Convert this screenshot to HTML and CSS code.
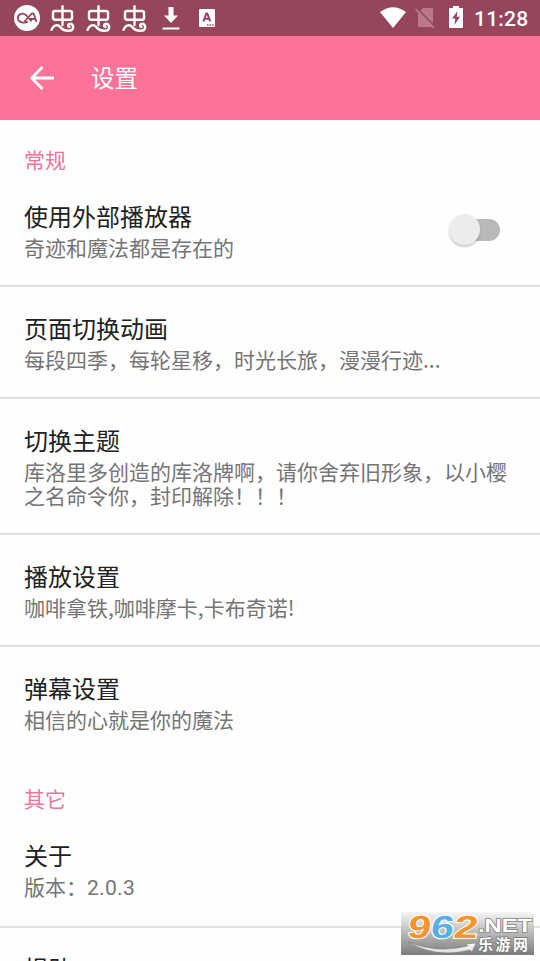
FILE: index.html
```
<!DOCTYPE html>
<html lang="zh-CN">
<head>
<meta charset="utf-8">
<title>设置</title>
<link rel="stylesheet" href="styles.css">
</head>
<body>
<svg class="defs" width="0" height="0"><defs><g id="bug" fill="none" stroke="#fff" stroke-width="2.4" stroke-linecap="round" stroke-linejoin="round"><rect x="3" y="6" width="19" height="8.800" rx="2"/><path d="M12.500 1.300V20M1.500 24.800C3.500 20.300 7.500 18.800 10 21.800C12.500 25.300 14.500 25.800 18.500 25.800C25 25.800 24 18.300 20 18.800C17.500 19.100 17.500 21.800 19.500 21.800"/></g></defs></svg>
<div class="screen">
  <header class="status">
    <div class="notices">
      <svg width="26" height="26" viewBox="0 0 26 26"><circle cx="13" cy="13" r="13" fill="#fff"/><path d="M14 16.500C11 18.500 4 18 4 13C4 8.500 9 7.500 12 10L17.500 16.500M10.500 16.500L17.500 8.800C18.500 8 19.500 8.500 20 9.500L22.500 17M15 14H20.500" fill="none" stroke="#96455b" stroke-width="1.800"/></svg>
      <svg class="bug" width="26" height="28" viewBox="0 0 26 28"><use href="#bug"/></svg>
      <svg class="bug" width="26" height="28" viewBox="0 0 26 28"><use href="#bug"/></svg>
      <svg class="bug" width="26" height="28" viewBox="0 0 26 28"><use href="#bug"/></svg>
      <svg class="download" width="18" height="24" viewBox="0 0 18 24"><path d="M6.500 1h5v8.500h4.500L9 17 2 9.500h4.500zM.5 21.500h17v2H.5z" fill="#fff"/></svg>
      <svg class="letter" width="16" height="18" viewBox="0 0 16 18"><rect width="16" height="18" rx="1" fill="#fff"/><path d="M4.300 12.500L7.300 4.500h1L11.300 12.500M5.500 9.800h4.600" fill="none" stroke="#96455b" stroke-width="2"/><path d="M8 15.200h1.500v1.500H8zM10.600 15.200h1.500v1.500h-1.500zM13.200 15.200h1.500v1.500h-1.500z" fill="#96455b"/></svg>
    </div>
    <div class="system">
      <svg class="wifi" width="26" height="21" viewBox="0 0 26 21"><path d="M0 5Q13-4.500 26 5L13 21z" fill="#fff"/></svg>
      <svg class="sim" width="20" height="22" viewBox="0 0 20 22"><path d="M8 1h9q1 0 1 1v17q0 1-1 1H4q-1 0-1-1V6z" fill="#b9798a"/><path d="M1.500 .5L20 19.500" stroke="#96455b" stroke-width="1.500"/><path d="M.5 2L19 21" stroke="#b9798a" stroke-width="1.700"/></svg>
      <svg class="battery" width="14" height="22" viewBox="0 0 14 22"><path d="M4 0h6v2h3q1 0 1 1v18q0 1-1 1H1q-1 0-1-1V3q0-1 1-1h3z" fill="#fff"/><path d="M8.500 5L3 12.500h3.300L5.500 19 11 10.800H7.800z" fill="#96455b"/></svg>
      <span class="clock">11:28</span>
    </div>
  </header>
  <nav class="appbar">
    <svg width="24" height="24" viewBox="0 0 24 24"><path d="M24 12H2M12.500 1L1.700 12l10.800 11" fill="none" stroke="#fff" stroke-width="2.800"/></svg>
    <h1>设置</h1>
  </nav>
  <main>
    <h2>常规</h2>
    <section class="row first with-switch"><div><h3>使用外部播放器</h3><p>奇迹和魔法都是存在的</p></div><div class="switch"><div class="thumb"></div></div></section>
    <section class="row"><h3>页面切换动画</h3><p>每段四季，每轮星移，时光长旅，漫漫行迹...</p></section>
    <section class="row"><h3>切换主题</h3><p>库洛里多创造的库洛牌啊，请你舍弃旧形象，以小樱<br>之名命令你，封印解除！！！</p></section>
    <section class="row"><h3>播放设置</h3><p>咖啡拿铁,咖啡摩卡,卡布奇诺!</p></section>
    <section class="row last"><h3>弹幕设置</h3><p>相信的心就是你的魔法</p></section>
    <h2>其它</h2>
    <section class="row about"><h3>关于</h3><p>版本：<span class="version">2.0.3</span></p></section>
    <section class="row about"><h3>捐助</h3></section>
  </main>
  <svg class="watermark" width="133" height="43" viewBox="0 0 133 43">
    <defs>
      <linearGradient id="shade" x2="0" y2="1"><stop stop-color="#f5f5f5"/><stop offset=".5" stop-color="#b8b8b8"/><stop offset="1" stop-color="#7c7c7c"/></linearGradient>
      <linearGradient id="swoosh" x2="0" y2="1"><stop stop-color="#fff"/><stop offset="1" stop-color="#ddd"/></linearGradient>
    </defs>
    <rect width="133" height="43" fill="url(#shade)"/>
    <path d="M7 30Q36 42 67 34L65 32 75 31 71 40 69 38Q36 47 7 30z" fill="url(#swoosh)" stroke="#777" stroke-width=".5"/>
    <g class="digits" transform="translate(3.500 0) skewX(-8)"><text x="6" y="26" textLength="23" lengthAdjust="spacingAndGlyphs" fill="#f7942b">9</text><text x="29" y="26" textLength="23" lengthAdjust="spacingAndGlyphs" fill="#56b0e5">6</text><text x="52" y="26" textLength="24" lengthAdjust="spacingAndGlyphs" fill="#f7942b">2</text></g>
    <text class="net" x="77" y="20" textLength="54" lengthAdjust="spacingAndGlyphs">.NET</text>
    <text class="brand" x="77" y="38" textLength="50">乐游网</text>
  </svg>
</div>
</body>
</html>
```
FILE: styles.css
```
* { box-sizing: border-box; margin: 0; padding: 0; }
body { font-family: Roboto, "Noto Sans CJK SC", sans-serif; background: #fefefe; overflow: hidden; }
svg { display: block; flex: none; }
.defs { position: absolute; }
.screen { position: relative; height: 961px; overflow: hidden; }
.status { height: 36px; background: #96455b; display: flex; justify-content: space-between; padding: 0 12px 0 14px; }
.notices, .system { display: flex; align-items: center; }
.notices { gap: 10px; }
.bug { margin-top: 1px; }
.download { margin-left: 4px; }
.letter { margin-left: 9px; }
.system { color: #fff; }
.wifi { margin-top: -2px; }
.sim { margin-left: 9px; }
.battery { margin-left: 14px; margin-top: -2px; }
.clock { font-size: 21px; font-weight: 500; margin-left: 11px; width: 54px; white-space: nowrap; letter-spacing: .2px; padding-top: 2px; }
.appbar { height: 84px; background: #fc7298; display: flex; align-items: center; padding-left: 30px; gap: 37px; color: #fff; }
h1 { font-size: 23.5px; line-height: 36px; font-weight: 400; padding-top: 2px; }
h2 { height: 56px; padding: 25px 24px 0; font-size: 21px; line-height: 32px; font-weight: 400; color: #f4749a; }
.row { min-height: 112px; padding: 29px 24px 26px; border-bottom: 2px solid #e0e0e0; white-space: nowrap; }
.first { min-height: 111px; padding-top: 28px; }
.about { padding-top: 28px; }
.last { border-bottom-color: transparent; }
h3 { font-size: 24px; line-height: 28px; font-weight: 400; color: #212121; }
p { margin-top: 3px; font-family: "Noto Sans CJK SC", sans-serif; font-size: 21px; line-height: 24px; color: #757575; }
.version { font-family: Roboto, sans-serif; letter-spacing: .3px; }
.with-switch { display: flex; justify-content: space-between; }
.switch { width: 48px; height: 22px; margin: 15px 16px 0 0; border-radius: 11px; background: #b9b9b9; }
.thumb { width: 31px; height: 31px; margin: -5px 0 0 -3px; border-radius: 50%; background: #ececec; box-shadow: 0 2px 2px #0003; }
.watermark { position: absolute; left: 401px; top: 912px; }
.digits { font: 700 32px "Liberation Sans", sans-serif; stroke: #fff; stroke-width: 2px; paint-order: stroke; }
.net { font: 700 18px "Liberation Sans", sans-serif; fill: #fff; stroke: #888; stroke-width: 1.5px; paint-order: stroke; }
.brand { font: 700 15px "Noto Sans CJK SC", sans-serif; fill: #fff; stroke: #777; stroke-width: 1.5px; paint-order: stroke; }
```
